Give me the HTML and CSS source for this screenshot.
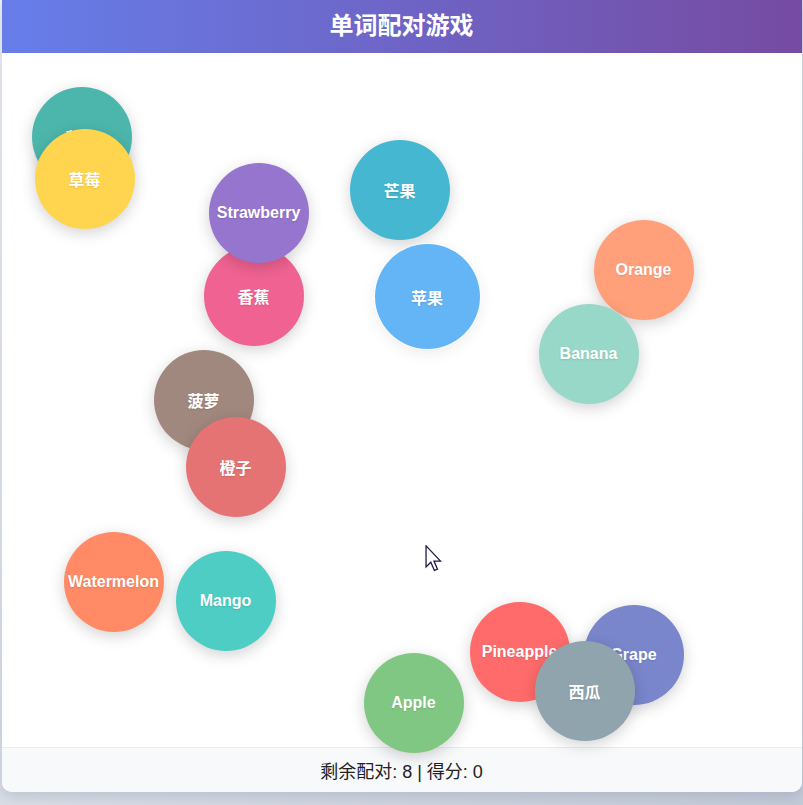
FILE: index.html
```html
<!DOCTYPE html>
<html lang="zh">
<head>
<meta charset="utf-8">
<title>单词配对游戏</title>
<link rel="stylesheet" href="styles.css">
</head>
<body>
<div class="app">
  <header class="header"><h1 class="title">单词配对游戏</h1></header>
  <main class="board">
    <div class="bubble c-teal" style="left:30px;top:34px">葡萄</div>
    <div class="bubble c-yellow" style="left:33px;top:76px">草莓</div>
    <div class="bubble c-pink" style="left:202px;top:193px">香蕉</div>
    <div class="bubble c-purple" style="left:207px;top:110px">Strawberry</div>
    <div class="bubble c-cyan" style="left:348px;top:87px">芒果</div>
    <div class="bubble c-blue big" style="left:373px;top:191px">苹果</div>
    <div class="bubble c-salmon" style="left:592px;top:167px">Orange</div>
    <div class="bubble c-mint" style="left:537px;top:251px">Banana</div>
    <div class="bubble c-brown" style="left:152px;top:297px">菠萝</div>
    <div class="bubble c-rose" style="left:184px;top:364px">橙子</div>
    <div class="bubble c-coral" style="left:62px;top:479px">Watermelon</div>
    <div class="bubble c-aqua" style="left:174px;top:498px">Mango</div>
    <div class="bubble c-red" style="left:468px;top:549px">Pineapple</div>
    <div class="bubble c-indigo" style="left:582px;top:552px">Grape</div>
    <div class="bubble c-green" style="left:362px;top:600px">Apple</div>
    <div class="bubble c-gray" style="left:533px;top:588px">西瓜</div>
    <svg class="cursor" width="17" height="27" viewBox="0 0 13 21" aria-hidden="true">
      <path d="M0.7 0.7 L0.7 17 L4.4 13.4 L7.2 19.8 L9.6 18.8 L6.9 12.5 L12 12.5 Z" fill="#fff" stroke="#1c1a4a" stroke-width="1" stroke-linejoin="miter"/>
    </svg>
  </main>
  <footer class="footer">剩余配对: 8 | 得分: 0</footer>
</div>
</body>
</html>
```

FILE: styles.css
```css
html, body {
  margin: 0;
  padding: 0;
  height: 100%;
}
body {
  background: linear-gradient(135deg, #eef1f5 0%, #c3cad8 100%);
  font-family: "Liberation Sans", "Noto Sans CJK SC", sans-serif;
  overflow: hidden;
}
.app {
  width: 800px;
  height: 792px;
  margin: 0 auto;
  background: #fff;
  border-radius: 0 0 10px 10px;
  box-shadow: 0 4px 14px rgba(60, 70, 100, 0.18);
  display: flex;
  flex-direction: column;
}
.header {
  background: linear-gradient(90deg, #667eea 0%, #764ba2 100%);
  height: 53px;
  display: flex;
  align-items: center;
  justify-content: center;
}
.title {
  margin: 0;
  color: #fff;
  font-size: 24px;
  font-weight: bold;
  line-height: 1;
  padding-bottom: 2px;
}
.board {
  flex: 1;
  position: relative;
}
.bubble {
  position: absolute;
  width: 100px;
  height: 100px;
  border-radius: 50%;
  display: flex;
  align-items: center;
  justify-content: center;
  color: #fff;
  font-size: 16px;
  font-weight: bold;
  box-shadow: 0 4px 15px rgba(0, 0, 0, 0.18);
  text-shadow: 0 1px 2px rgba(0, 0, 0, 0.12);
}
.bubble.big {
  width: 105px;
  height: 105px;
  box-shadow: 0 0 0 1px rgba(255,255,255,0.6), 0 4px 15px rgba(0, 0, 0, 0.08);
}
.c-teal { background: #4db6ac; }
.c-yellow { background: #ffd54f; }
.c-pink { background: #f06292; }
.c-purple { background: #9575cd; }
.c-cyan { background: #45b7d1; }
.c-blue { background: #64b5f6; }
.c-salmon { background: #ffa07a; }
.c-mint { background: #98d8c8; }
.c-brown { background: #a1887f; }
.c-rose { background: #e57373; }
.c-coral { background: #ff8a65; }
.c-aqua { background: #4ecdc4; }
.c-red { background: #ff6b6b; }
.c-indigo { background: #7986cb; }
.c-green { background: #81c784; }
.c-gray { background: #90a4ae; }
.cursor {
  position: absolute;
  left: 423px;
  top: 492px;
}
.footer {
  background: #f8f9fa;
  border-top: 1px solid #e9ecef;
  border-radius: 0 0 10px 10px;
  height: 44px;
  display: flex;
  align-items: center;
  justify-content: center;
  font-size: 18px;
  color: #222;
}
```
